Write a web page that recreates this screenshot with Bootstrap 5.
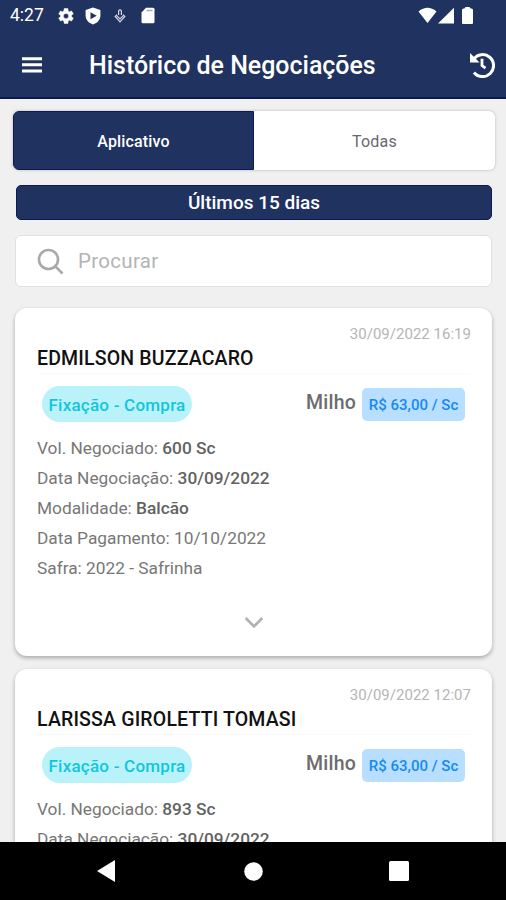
<!DOCTYPE html>
<html lang="pt-BR">
<head>
<meta charset="utf-8">
<meta name="viewport" content="width=device-width, initial-scale=1">
<title>Histórico de Negociações</title>
<link href="https://cdn.jsdelivr.net/npm/bootstrap@5.3.0/dist/css/bootstrap.min.css" rel="stylesheet">
<style>
  body { font-family: Roboto, "Liberation Sans", sans-serif; background: #f0f0f0; line-height: 1; }
  .screen { height: 900px; }
  svg { display: block; flex: none; }
  .navy { background: #203260; color: #fff; }
  .status { height: 31px; padding: 0 33px 0 10px; }
  .clock { font-size: 17.5px; padding-top: 1px; }
  .icon-gear { margin-left: 13px; }
  .icon-shield { margin-left: 10px; }
  .icon-down { margin-left: 13px; }
  .icon-sd { margin-left: 15px; }
  .icon-signal { margin-left: 1px; }
  .icon-battery { margin-left: 8px; }
  .appbar { height: 68px; padding: 2px 11px 0 22px; border-bottom: 2px solid #0c1650; }
  .appbar h1 { font-size: 25px; font-weight: 500; margin: 0 0 0 47px; padding-top: 2px; letter-spacing: -.03px; white-space: nowrap; }
  .tabs { height: 59px; margin: 12px 11px 0 13px; border-radius: 6px; background: #fff; box-shadow: 0 0 3px rgba(0,0,0,.25); font-size: 16px; }
  .tabs > div { padding-top: 2px; }
  .tabs .on { border: 1px solid #0c1a55; border-radius: 6px 0 0 6px; font-weight: 500; letter-spacing: .15px; }
  .tabs .off { color: #686870; letter-spacing: .25px; }
  .period { height: 35px; margin: 15px 14px 0 16px; border: 1px solid #0c1a55; border-radius: 5px; font-size: 19px; font-weight: 500; }
  .search { height: 52px; margin: 15px 14px 0 15px; padding-left: 21px; border: 1px solid #e0e0e0; border-radius: 6px; color: #b4b4b4; font-size: 20.5px; letter-spacing: .3px; background: #fff; }
  .search span { margin-left: 14px; }
  .deals { padding: 21px 14px 0 15px; gap: 13px; min-height: 0; }
  .deal { flex: none; height: 348px; border: 0; border-radius: 12px; padding: 18px 21px 0 22px; box-shadow: 0 2px 4px rgba(0,0,0,.3); color: #777; }
  .stamp { font-size: 15px; color: #b5b5b5; letter-spacing: .02px; height: 17px; line-height: 17px; }
  .deal h2 { font-size: 19.5px; line-height: 22px; height: 31px; padding-top: 5px; margin: 0 0 12px; color: #111; font-weight: 500; border-bottom: 1px solid #fafafa; letter-spacing: .17px; }
  .kind { height: 36px; width: 150px; margin-left: 5px; border-radius: 18px; background: #b9f3f9; color: #12c5de; font-size: 17px; font-weight: 500; letter-spacing: .23px; padding-top: 2px; }
  .crop { font-size: 19.5px; font-weight: 500; color: #6c6c6c; letter-spacing: .2px; margin: 0 6px 2px 0; }
  .price { width: 103px; height: 33px; margin-right: 6px; border-radius: 5px; background: #b8dfff; color: #1689f5; font-size: 15px; font-weight: 500; letter-spacing: .02px; padding-top: 2px; }
  .facts { font-size: 17.3px; line-height: 30px; margin-top: 11px; letter-spacing: 0; }
  .facts b { font-weight: 500; color: #626262; }
  .keys { height: 58px; background: #000; z-index: 1; padding: 0 97px 0 97px; }
</style>
</head>
<body>
<div class="screen d-flex flex-column overflow-hidden">
  <div class="status navy d-flex align-items-center flex-shrink-0">
    <span class="clock">4:27</span>
    <svg class="icon-gear" width="18" height="18" viewBox="0 0 24 24" fill="#fff"><path d="M19.4 13a7.500 7.500 0 0 0 0-2l2.400-1.800-2.300-4-2.900 1.200a8 8 0 0 0-1.700-1L14.500 2h-5l-.4 3.400a8 8 0 0 0-1.700 1L4.500 5.200l-2.300 4L4.600 11a7.500 7.500 0 0 0 0 2l-2.400 1.800 2.300 4 2.900-1.200a8 8 0 0 0 1.700 1l.4 3.400h5l.4-3.400a8 8 0 0 0 1.700-1l2.900 1.200 2.300-4zM12 15.500a3.500 3.500 0 1 1 0-7 3.500 3.500 0 0 1 0 7z" stroke="#fff" stroke-width=".6"/></svg>
    <svg class="icon-shield" width="16" height="18" viewBox="0 0 16 18"><path d="M8 .5 15.400 3v5.500c0 4.300-3 7.500-7.400 9-4.400-1.500-7.400-4.700-7.400-9V3z" fill="#fff"/><path d="m5.500 5.200 6.200 3.500-6.200 3.500z" fill="#203260"/></svg>
    <svg class="icon-down" width="12" height="14" viewBox="0 0 12 14" fill="none" stroke="#d5d8e2" stroke-width="1.200"><path d="M4.600 6V2.200a1.400 1.400 0 0 1 2.800 0V6M3 6.800 6 9.800l3-3M3 5.800 1.200 7.500 6 12.800l4.800-5.300L9 5.800"/></svg>
    <svg class="icon-sd" width="14" height="17" viewBox="0 0 14 17"><path d="M5 .7h7q1.500 0 1.500 1.500v12.600q0 1.500-1.500 1.500H2q-1.500 0-1.500-1.500V5.500z" fill="#fff"/><path d="M5.500 3.500h6" stroke="#a4abc0" stroke-width="1.500"/></svg>
    <svg class="icon-wifi ms-auto" width="19" height="17" viewBox="0 0 19 17"><path d="M.5 4.500Q9.500-3 18.500 4.500L9.500 16z" fill="#fff"/></svg>
    <svg class="icon-signal" width="16" height="17" viewBox="0 0 16 17"><path d="M16 .8v15.700H0z" fill="#fff"/></svg>
    <svg class="icon-battery" width="11" height="17" viewBox="0 0 11 17"><path d="M3.500 0h4l1 1.500h1q1.500 0 1.500 1.500V16q0 1-1 1H1q-1 0-1-1V3q0-1.500 1.500-1.500h1z" fill="#fff"/></svg>
  </div>
  <header class="appbar navy d-flex align-items-center flex-shrink-0">
    <svg width="20" height="16" viewBox="0 0 20 16"><path d="M0 1.700h20M0 7.800h20M0 14h20" stroke="#fff" stroke-width="3"/></svg>
    <h1>Histórico de Negociações</h1>
    <svg class="ms-auto" width="26" height="26" viewBox="0 0 26 26" fill="none" stroke="#fff"><path d="M4.600 7.200A11 11 0 1 1 5 20.500" stroke-width="3"/><path d="M1 1v9.500h9.500z" fill="#fff" stroke="none"/><path d="M13 6.800v6.800l3.500 2.600" stroke-width="2.800"/></svg>
  </header>

  <nav class="tabs d-flex flex-shrink-0">
    <div class="on navy w-50 d-flex align-items-center justify-content-center">Aplicativo</div>
    <div class="off w-50 d-flex align-items-center justify-content-center">Todas</div>
  </nav>
  <div class="period navy d-flex align-items-center justify-content-center flex-shrink-0">Últimos 15 dias</div>
  <div class="search d-flex align-items-center flex-shrink-0">
    <svg width="27" height="27" viewBox="0 0 27 27" fill="none" stroke="#a9a9a9" stroke-width="2.600"><circle cx="11.500" cy="11.500" r="9.500"/><path d="m18.300 18.300 7.200 7.200"/></svg>
    <span>Procurar</span>
  </div>

  <main class="deals d-flex flex-column flex-grow-1 overflow-hidden">
    <article class="deal card">
      <div class="stamp text-end">30/09/2022 16:19</div>
      <h2>EDMILSON BUZZACARO</h2>
      <div class="d-flex align-items-center">
        <div class="kind d-flex align-items-center justify-content-center">Fixação - Compra</div>
        <div class="crop ms-auto">Milho</div>
        <div class="price d-flex align-items-center justify-content-center">R$ 63,00 / Sc</div>
      </div>
      <div class="facts">
        <div>Vol. Negociado: <b>600 Sc</b></div>
        <div>Data Negociação: <b>30/09/2022</b></div>
        <div>Modalidade: <b>Balcão</b></div>
        <div>Data Pagamento: 10/10/2022</div>
        <div>Safra: 2022 - Safrinha</div>
      </div>
      <svg class="mx-auto mt-auto mb-4" width="20" height="20" viewBox="0 0 20 20" fill="none" stroke="#b0b0b0" stroke-width="2.600"><path d="m1.700 6 8.300 8.300L18.300 6"/></svg>
    </article>
    <article class="deal card">
      <div class="stamp text-end">30/09/2022 12:07</div>
      <h2>LARISSA GIROLETTI TOMASI</h2>
      <div class="d-flex align-items-center">
        <div class="kind d-flex align-items-center justify-content-center">Fixação - Compra</div>
        <div class="crop ms-auto">Milho</div>
        <div class="price d-flex align-items-center justify-content-center">R$ 63,00 / Sc</div>
      </div>
      <div class="facts">
        <div>Vol. Negociado: <b>893 Sc</b></div>
        <div>Data Negociação: <b>30/09/2022</b></div>
      </div>
    </article>
  </main>

  <footer class="keys d-flex align-items-center justify-content-between flex-shrink-0">
    <svg width="18" height="22" viewBox="0 0 18 22"><path d="M18 0v22L0 11z" fill="#fff"/></svg>
    <svg width="21" height="19" viewBox="0 0 21 19"><circle cx="11.500" cy="9.500" r="9.300" fill="#fff"/></svg>
    <svg width="20" height="20" viewBox="0 0 20 20"><rect width="20" height="20" rx="1.500" fill="#fff"/></svg>
  </footer>
</div>
<script src="https://cdn.jsdelivr.net/npm/bootstrap@5.3.0/dist/js/bootstrap.bundle.min.js"></script>
</body>
</html>
